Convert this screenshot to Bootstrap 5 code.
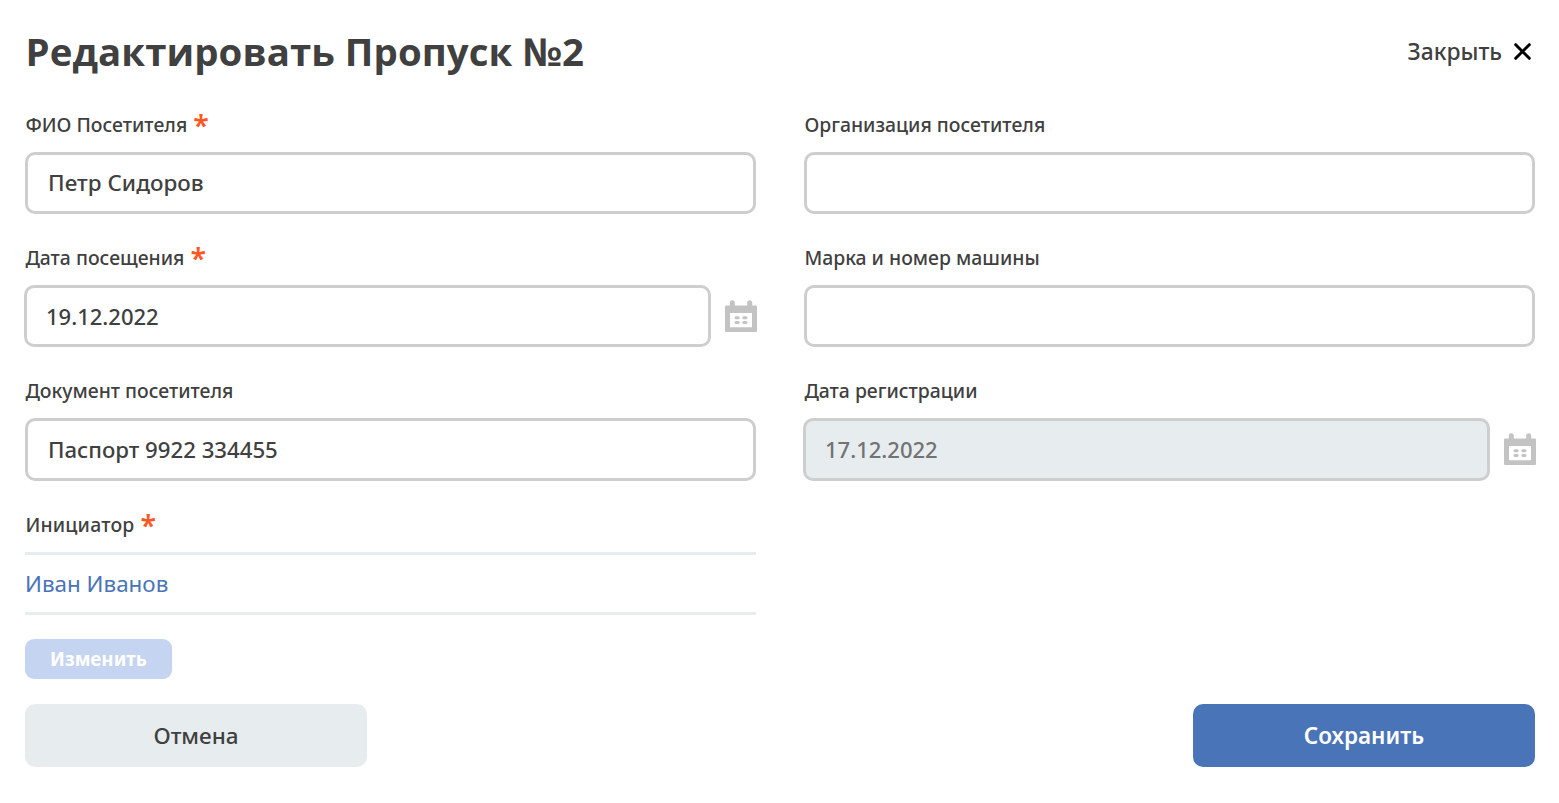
<!DOCTYPE html>
<html lang="ru">
<head>
<meta charset="utf-8">
<meta name="viewport" content="width=device-width, initial-scale=1">
<title>Редактировать Пропуск №2</title>
<link href="https://cdn.jsdelivr.net/npm/bootstrap@5.3.0/dist/css/bootstrap.min.css" rel="stylesheet">
<style>
body{font-family:"Noto Sans","Open Sans",sans-serif;color:#404040;background:#fff;font-weight:500}
.pass-form{padding:26px 24px 0 25px}
.form-title{font-family:"Open Sans","Noto Sans",sans-serif;font-size:38.4px;font-weight:700;line-height:50px;letter-spacing:.07px;padding-left:.6px}
.close-btn{font-size:22.8px;line-height:30px;color:#404040;font-weight:500;gap:12px;margin:2px 4px 0 0}
.close-btn svg{margin-top:-1px}
.fields{display:grid;grid-template-columns:731px 731px;column-gap:48px;margin-top:33.6px}
.field{height:133.4px}
.field .form-label{display:flex;height:30px;line-height:29px;font-size:19.4px;margin:0 0 12px;padding-left:.4px;white-space:pre}
.req{color:#ff5722;font-size:28.5px;font-weight:600;margin-left:6px;line-height:30px}
.initiator .form-label{letter-spacing:.2px}
.field .form-control{height:62.5px;border:3px solid #cecece;border-radius:10px;font-size:22.2px;font-weight:500;color:#404040;padding:0 20px;background:#fff}
.field #fio{font-size:22.4px;letter-spacing:.04px}
.field .form-control:disabled{background:#e7ecef;color:#737373;opacity:1}
.field .date-group{margin:0 -1px;gap:14px}
.date-group .form-control{padding-left:19px;font-size:22px}
.date-group #reg{padding-bottom:1px}
.date-group svg{flex:none;margin-top:-1px}
.person-box{border-top:3px solid #e7ecef;border-bottom:3px solid #e7ecef;height:63px;font-size:22.4px;font-weight:400;color:#4a74b8;padding-top:1px}
.btn-change,.btn-change:disabled{width:147px;height:40px;border-radius:9px;background:#c5d4f0;border:0;color:#fff;opacity:1;font-size:18.8px;font-weight:700;padding:0;margin-top:24px}
.form-actions{padding-top:25.4px}
.btn-wide{width:342px;height:63px;border-radius:10px;border:0;font-size:22.5px;padding:0}
.btn-cancel{background:#e7ecef;color:#404040;font-weight:500}
.btn-save{background:#4a74b8;color:#fff;font-weight:600;padding-top:1px}
</style>
</head>
<body>
<svg class="d-none"><symbol id="calendar" viewBox="0 0 32 32"><path fill="#c3c3c3" fill-rule="evenodd" d="M1 5.500H4.800V2.800A2.400 2.400 0 0 1 9.800 2.800V5.500H22.200V2.800A2.400 2.400 0 0 1 27.200 2.800V5.500H31Q32 5.500 32 6.500V31Q32 32 31 32H1Q0 32 0 31V6.500Q0 5.500 1 5.500ZM5 13V27.300H27V13Z"/><path stroke="#c3c3c3" stroke-width="3" stroke-linecap="round" d="M11 17.700h2.200M18.800 17.700h2.200M11 22.500h2.200M18.800 22.500h2.200"/></symbol></svg>
<form class="pass-form">
  <header class="d-flex justify-content-between align-items-center">
    <h1 class="form-title m-0">Редактировать Пропуск №2</h1>
    <button type="button" class="btn close-btn border-0 p-0 d-flex align-items-center">Закрыть <svg width="17" height="17" viewBox="0 0 17 17"><path d="M1.700 1.700l13.600 13.600M15.300 1.700L1.700 15.300" stroke="#000" stroke-width="3" stroke-linecap="round"/></svg></button>
  </header>
  <div class="fields">
    <div class="field"><label class="form-label" for="fio">ФИО Посетителя<span class="req">*</span></label><input class="form-control" id="fio" value="Петр Сидоров"></div>
    <div class="field"><label class="form-label" for="org">Организация посетителя</label><input class="form-control" id="org"></div>
    <div class="field"><label class="form-label" for="visit">Дата посещения<span class="req">*</span></label><div class="date-group d-flex align-items-center"><input class="form-control" id="visit" value="19.12.2022"><svg width="32" height="32"><use href="#calendar"/></svg></div></div>
    <div class="field"><label class="form-label" for="car">Марка и номер машины</label><input class="form-control" id="car"></div>
    <div class="field"><label class="form-label" for="doc">Документ посетителя</label><input class="form-control" id="doc" value="Паспорт 9922 334455"></div>
    <div class="field"><label class="form-label" for="reg">Дата регистрации</label><div class="date-group d-flex align-items-center"><input class="form-control" id="reg" value="17.12.2022" disabled><svg width="32" height="32"><use href="#calendar"/></svg></div></div>
    <div class="initiator"><div class="field h-auto"><label class="form-label">Инициатор<span class="req">*</span></label></div><div class="person-box d-flex align-items-center">Иван Иванов</div><button type="button" class="btn btn-change" disabled>Изменить</button></div>
  </div>
  <footer class="form-actions d-flex justify-content-between">
    <button type="button" class="btn btn-wide btn-cancel">Отмена</button>
    <button type="submit" class="btn btn-wide btn-save">Сохранить</button>
  </footer>
</form>
<script src="https://cdn.jsdelivr.net/npm/bootstrap@5.3.0/dist/js/bootstrap.bundle.min.js"></script>
</body>
</html>
